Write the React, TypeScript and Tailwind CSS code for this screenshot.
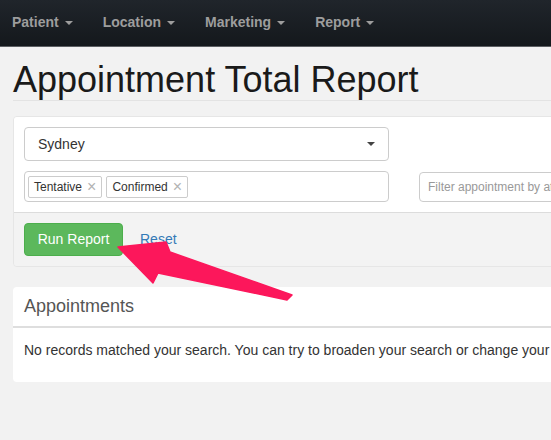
import React from 'react';

const font = { fontFamily: '"Liberation Sans", Arial, sans-serif' };

const NavItem: React.FC<{ label: string }> = ({ label }) => (
  <div className="flex items-center px-[15px] text-[14px] font-bold text-[#9d9d9d]">
    <span>{label}</span>
    <span className="ml-[6px] mt-[1px] h-0 w-0 border-x-[4px] border-t-[4px] border-x-transparent border-t-[#9d9d9d]" />
  </div>
);

const Tag: React.FC<{ label: string }> = ({ label }) => (
  <span className="flex h-[22px] items-center rounded-[2px] border border-[#ccc] px-[5px] text-[12px] text-[#333]">
    {label}
    <span className="ml-[5px] text-[16px] leading-none text-[#b3b3b3]">×</span>
  </span>
);

const Arrow: React.FC = () => (
  <svg className="pointer-events-none absolute left-0 top-0" width="551" height="440" viewBox="0 0 551 440">
    <polygon
      points="118,247 166,242 170,252 292,295 287,300 158,273 153,283"
      fill="#fc175b"
      stroke="#fc175b"
      strokeWidth="1.5"
      strokeLinejoin="round"
    />
  </svg>
);

export default function App() {
  return (
    <div className="relative h-[440px] w-[551px] overflow-hidden bg-[#f2f2f2]" style={font}>
      {/* Navbar */}
      <nav className="-ml-[3px] flex h-[47px] items-center border-b border-[#5c5f63] bg-gradient-to-b from-[#20252b] to-[#14181c] pb-[2px]">
        <NavItem label="Patient" />
        <NavItem label="Location" />
        <NavItem label="Marketing" />
        <NavItem label="Report" />
      </nav>

      <div className="w-[800px] pl-[13px]">
        {/* Title */}
        <h1 className="mt-[13px] border-b border-[#e3e3e3] text-[36px] leading-[40px] text-[#1a1a1a]">
          Appointment Total Report
        </h1>

        {/* Filter panel */}
        <div className="mt-[15px] overflow-hidden rounded-[4px] border border-[#e6e6e6]">
          <div className="bg-white px-[10px] pb-[10px] pt-[10px]">
            <div className="flex h-[34px] w-[365px] items-center justify-between rounded-[4px] border border-[#ccc] pl-[13px] pr-[13px] text-[14px] text-[#333]">
              <span>Sydney</span>
              <span className="h-0 w-0 border-x-[4px] border-t-[4px] border-x-transparent border-t-[#444]" />
            </div>
            <div className="mt-[10px] flex items-center gap-[30px]">
              <div className="flex h-[31px] w-[365px] items-center gap-[4px] rounded-[4px] border border-[#ccc] px-[3px]">
                <Tag label="Tentative" />
                <Tag label="Confirmed" />
              </div>
              <div className="flex h-[30px] flex-1 items-center rounded-[4px] border border-[#ccc] px-[8px] text-[12px] text-[#999]">
                Filter appointment by attribute
              </div>
            </div>
          </div>
          <div className="flex items-center gap-[17px] border-t border-[#dcdcdc] bg-[#f3f3f3] px-[10px] pb-[10px] pt-[10px]">
            <button className="h-[33px] w-[99px] rounded-[4px] border border-[#4cae4c] bg-[#5cb85c] text-[14px] text-white">
              Run Report
            </button>
            <span className="text-[14px] text-[#337ab7]">Reset</span>
          </div>
        </div>

        {/* Appointments panel */}
        <div className="mt-[20px] rounded-[4px] bg-white">
          <div className="flex h-[41px] items-center border-b-2 border-[#dedede] px-[11px] text-[18px] text-[#555]">
            Appointments
          </div>
          <div className="px-[11px] pb-[21px] pt-[12px] text-[14px] text-[#333]">
            No records matched your search. You can try to broaden your search or change your filters.
          </div>
        </div>
      </div>

      <Arrow />
    </div>
  );
}
